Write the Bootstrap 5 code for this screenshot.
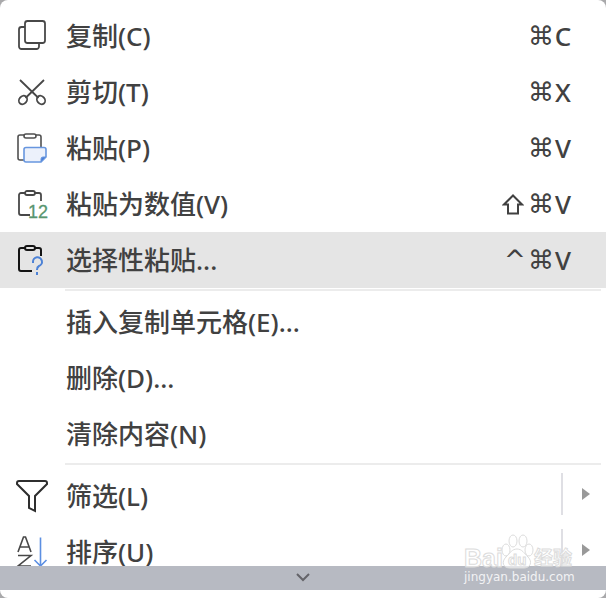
<!DOCTYPE html>
<html lang="zh-CN">
<head>
<meta charset="utf-8">
<meta name="viewport" content="width=device-width, initial-scale=1">
<title>右键菜单</title>
<link href="https://cdn.jsdelivr.net/npm/bootstrap@5.3.0/dist/css/bootstrap.min.css" rel="stylesheet">
<style>
body{background:#a9a9ab;font-family:"Noto Sans","Noto Sans CJK SC",sans-serif;color:#414141}
.ctx-menu{background:#fff;border-radius:8px}
.ctx-list{min-height:0}
.ctx-item{height:56px;padding:0 34px 0 16px;font-size:26px;font-weight:500;line-height:36px;color:#414141;border-radius:0}
.ctx-item:hover{color:#414141;background:#e5e5e5}
.ctx-item.is-current{background:#e5e5e5}
.ctx-icon{width:32px;height:36px;margin-right:18px}
.ctx-icon svg{display:block;overflow:visible}
.ctx-rule{height:2px;background:#ececec;margin:1px 5px 3px 65px}
.ctx-keys span{width:26px;text-align:center}
.ctx-keys .ctx-sym{font-family:"DejaVu Sans",sans-serif}
.ctx-keys .ctx-letter{width:18px}
.ctx-sub{padding-right:16px}
.ctx-arrow{margin-bottom:4px}
.ctx-arrow .ctx-bar{width:2px;height:42px;background:#dfdfe4;margin-right:19px}
.ctx-more{height:24px;background:#b7bac2;border:0;margin-bottom:8px}
.wm{right:33px;bottom:13px;width:109px}
.wm-site{font-size:12px;line-height:16px;color:#f2f2f4;font-family:"DejaVu Sans",sans-serif}
</style>
<script src="https://cdn.jsdelivr.net/npm/bootstrap@5.3.0/dist/js/bootstrap.bundle.min.js"></script>
</head>
<body>
<main class="ctx-menu vh-100 d-flex flex-column position-relative overflow-hidden">
<div class="ctx-list flex-fill overflow-hidden pt-2" role="menu">
<button type="button" role="menuitem" class="ctx-item btn border-0 w-100 d-flex align-items-center text-start">
<span class="ctx-icon"><svg width="32" height="36" viewBox="0 0 32 36" fill="none" stroke="#484848" stroke-width="1.8"><rect x="9" y="3" width="20" height="22" rx="2.500"/><path d="M9 9H5.500A2.500 2.500 0 0 0 3 11.500v17A2.500 2.500 0 0 0 5.500 31h15a2.500 2.500 0 0 0 2.500-2.500V25"/></svg></span>
<span class="flex-fill">复制(C)</span><span class="ctx-keys d-flex"><span class="ctx-sym">⌘</span><span class="ctx-letter">C</span></span></button>
<button type="button" role="menuitem" class="ctx-item btn border-0 w-100 d-flex align-items-center text-start">
<span class="ctx-icon"><svg width="32" height="36" viewBox="0 0 32 36" fill="none" stroke="#484848" stroke-width="1.8"><path d="M4 6l18.500 18M28 6L9.500 24"/><ellipse cx="7" cy="26" rx="3.800" ry="4.500" transform="rotate(40 7 26)"/><ellipse cx="25" cy="26" rx="3.800" ry="4.500" transform="rotate(-40 25 26)"/></svg></span>
<span class="flex-fill">剪切(T)</span><span class="ctx-keys d-flex"><span class="ctx-sym">⌘</span><span class="ctx-letter">X</span></span></button>
<button type="button" role="menuitem" class="ctx-item btn border-0 w-100 d-flex align-items-center text-start">
<span class="ctx-icon"><svg width="32" height="36" viewBox="0 0 32 36" fill="none" stroke="#505050" stroke-width="1.6"><path d="M8 5H4a2 2 0 0 0-2 2v21a2 2 0 0 0 2 2h4M20 5h3a2 2 0 0 1 2 2v10"/><rect x="8" y="4" width="12" height="4" rx="2"/><path d="M10 17.500h18a2 2 0 0 1 2 2V27l-5 5H10a2 2 0 0 1-2-2V19.500a2 2 0 0 1 2-2z" fill="#ecf1fb" stroke="#6796df"/><path d="M25 32v-3a2 2 0 0 1 2-2h3z" fill="#4c80d8" stroke="#6796df" stroke-width="1"/></svg></span>
<span class="flex-fill">粘贴(P)</span><span class="ctx-keys d-flex"><span class="ctx-sym">⌘</span><span class="ctx-letter">V</span></span></button>
<button type="button" role="menuitem" class="ctx-item btn border-0 w-100 d-flex align-items-center text-start">
<span class="ctx-icon"><svg width="32" height="36" viewBox="0 0 32 36" fill="none" stroke="#484848" stroke-width="1.8"><path d="M9 7H5a2 2 0 0 0-2 2v18a2 2 0 0 0 2 2h9M19 7h4a2 2 0 0 1 2 2v6"/><rect x="9" y="5" width="10" height="4" rx="2"/><text x="12" y="32" fill="#58966f" stroke="#58966f" stroke-width=".3" font-family="Liberation Sans,sans-serif" font-size="18">12</text></svg></span>
<span class="flex-fill">粘贴为数值(V)</span><span class="ctx-keys d-flex"><span class="d-flex align-items-center" role="img" aria-label="Shift"><svg width="22" height="22" viewBox="0 0 22 22" fill="none" stroke="#414141" stroke-width="2"><path d="M11 2.500L2 11.500h4V20.500h10v-9h4z"/></svg></span><span class="ctx-sym">⌘</span><span class="ctx-letter">V</span></span></button>
<button type="button" role="menuitem" class="ctx-item is-current btn border-0 w-100 d-flex align-items-center text-start">
<span class="ctx-icon"><svg width="32" height="36" viewBox="0 0 32 36" fill="none" stroke="#141414" stroke-width="2"><path d="M9 6H5a2 2 0 0 0-2 2v19a2 2 0 0 0 2 2h11M19 6h4a2 2 0 0 1 2 2v6"/><rect x="9" y="4" width="10" height="4" rx="2"/><path d="M17 21v-1a4.500 4.500 0 1 1 6 4c-2 1-2 2-2 4M21 30v3" stroke="#4d82d6"/></svg></span>
<span class="flex-fill">选择性粘贴...</span><span class="ctx-keys d-flex"><span class="ctx-sym">^</span><span class="ctx-sym">⌘</span><span class="ctx-letter">V</span></span></button>
<div class="ctx-rule" role="separator"></div>
<button type="button" role="menuitem" class="ctx-item btn border-0 w-100 d-flex align-items-center text-start"><span class="ctx-icon"></span><span class="flex-fill">插入复制单元格(E)...</span></button>
<button type="button" role="menuitem" class="ctx-item btn border-0 w-100 d-flex align-items-center text-start"><span class="ctx-icon"></span><span class="flex-fill">删除(D)...</span></button>
<button type="button" role="menuitem" class="ctx-item btn border-0 w-100 d-flex align-items-center text-start"><span class="ctx-icon"></span><span class="flex-fill">清除内容(N)</span></button>
<div class="ctx-rule" role="separator"></div>
<button type="button" role="menuitem" aria-haspopup="true" class="ctx-item ctx-sub btn border-0 w-100 d-flex align-items-center text-start">
<span class="ctx-icon"><svg width="32" height="36" viewBox="0 0 32 36" fill="none" stroke="#2e2e2e" stroke-width="2"><path d="M3 3h26q2 0 2 2v1L19 18v15l-6-3V18L1 6V5q0-2 2-2z"/></svg></span>
<span class="flex-fill">筛选(L)</span><span class="ctx-arrow d-flex align-items-center"><span class="ctx-bar"></span><svg width="8" height="12" viewBox="0 0 8 12"><path d="M0 0l8 6-8 6z" fill="#999"/></svg></span></button>
<button type="button" role="menuitem" aria-haspopup="true" class="ctx-item ctx-sub btn border-0 w-100 d-flex align-items-center text-start">
<span class="ctx-icon"><svg width="32" height="36" viewBox="0 0 32 36" fill="none" stroke="#484848" stroke-width="1.6"><path d="M2 18L7.500 3h2L15 18M4 13h9M2 21.500h13L2 32h13"/><path d="M24.500 3.500V32M18.500 26l6 6 6-6" stroke="#5c8fe2"/></svg></span>
<span class="flex-fill">排序(U)</span><span class="ctx-arrow d-flex align-items-center"><span class="ctx-bar"></span><svg width="8" height="12" viewBox="0 0 8 12"><path d="M0 0l8 6-8 6z" fill="#999"/></svg></span></button>
</div>
<button type="button" class="ctx-more w-100 p-0 d-flex align-items-center justify-content-center flex-shrink-0" aria-label="更多"><svg width="14" height="10" viewBox="0 0 14 10" fill="none" stroke="#646469" stroke-width="2"><path d="M1 1l6 6 6-6"/></svg></button>
<div class="wm position-absolute pe-none">
<svg class="d-block" width="109" height="38" viewBox="0 0 109 38" fill="#fff" fill-opacity=".6" stroke="#dcdcdc" stroke-width="1">
<text x="0" y="36" font-size="25" font-weight="700" font-family="Liberation Sans,sans-serif">Bai</text><text x="70" y="34" font-size="19" font-weight="700" font-family="Noto Sans CJK SC,sans-serif">经验</text>
<ellipse cx="42" cy="19" rx="4" ry="6"/><ellipse cx="49" cy="10" rx="4" ry="6"/><ellipse cx="59" cy="10" rx="4" ry="6"/><ellipse cx="65" cy="19" rx="4" ry="6"/>
<path d="M53 18c5 0 7 4 11 8 5 5 2 11-4 11H46c-7 0-9-6-4-11 4-4 6-8 11-8z"/><text x="44" y="34" font-size="15" font-weight="700" font-family="Liberation Sans,sans-serif">du</text></svg>
<div class="wm-site text-nowrap">jingyan.baidu.com</div>
</div>
</main>
</body>
</html>
